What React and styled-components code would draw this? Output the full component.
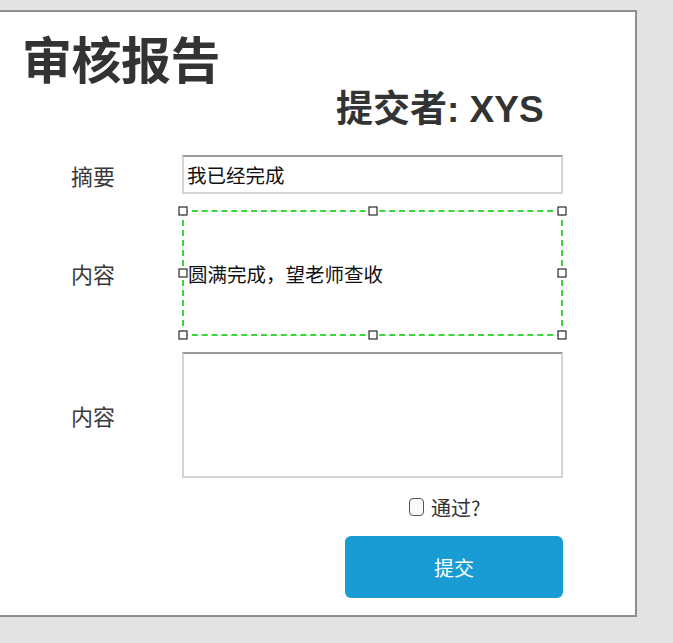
import React from "react";
import styled, { createGlobalStyle } from "styled-components";

const Global = createGlobalStyle`
  html, body { margin: 0; padding: 0; background: #e3e3e3; }
  body { font-family: "Noto Sans CJK SC", "Liberation Sans", sans-serif; color: #333; }
`;

const Panel = styled.div`
  box-sizing: border-box;
  margin-top: 10px;
  width: 637px;
  height: 607px;
  background: #fff;
  border: 2px solid #8e8e8e;
  border-left: none;
  position: relative;
`;

const Title = styled.h1`
  margin: 0;
  padding: 13px 0 0 22px;
  font-size: 50px;
  line-height: 64px;
  font-weight: 700;
  color: #333;
  letter-spacing: -0.5px;
`;

const Submitter = styled.h2`
  margin: 0;
  padding-left: 336px;
  font-size: 37px;
  line-height: 42px;
  font-weight: 700;
  color: #333;
  font-family: "Liberation Sans", "Noto Sans CJK SC", sans-serif;
`;

const Form = styled.div`
  display: grid;
  grid-template-columns: 182px 381px;
  row-gap: 16px;
  margin-top: 24px;
`;

const Label = styled.div`
  padding-left: 71px;
  font-size: 22px;
  color: #3a3a3a;
  display: flex;
  align-items: center;
`;

const Field = styled.div`
  box-sizing: border-box;
  height: ${(p) => p.$h}px;
  border: 2px solid #d4d4d4;
  border-top-color: #9a9a9a;
  background: #fff;
  display: flex;
  align-items: center;
  padding-left: 3px;
  font-size: 19.5px;
  color: #111;
  position: relative;
`;

const Selected = styled(Field)`
  border: 2px dashed #39d839;
  padding-left: 4px;
`;

const Handle = styled.span`
  box-sizing: border-box;
  position: absolute;
  width: 9px;
  height: 9px;
  background: #fff;
  border: 1px solid #000;
  left: ${(p) => p.$x};
  top: ${(p) => p.$y};
  transform: translate(-50%, -50%);
`;

const CheckRow = styled.label`
  display: flex;
  align-items: center;
  gap: 7px;
  margin: 15px 0 0 409px;
  font-size: 20px;
  color: #333;
  height: 28px;
`;

const Box = styled.span`
  box-sizing: border-box;
  width: 15px;
  height: 18px;
  border: 1px solid #555;
  border-radius: 4px;
  background: #fafafa;
`;

const ButtonRow = styled.div`
  display: flex;
  padding-left: 345px;
  margin-top: 15px;
`;

const Button = styled.button`
  width: 218px;
  height: 62px;
  border: none;
  border-radius: 6px;
  background: #199cd4;
  color: #fff;
  font-size: 20px;
  font-family: inherit;
`;

const handles = [
  ["-1px", "-1px"], ["50%", "-1px"], ["calc(100% + 1px)", "-1px"],
  ["-1px", "50%"], ["calc(100% + 1px)", "50%"],
  ["-1px", "calc(100% + 1px)"], ["50%", "calc(100% + 1px)"], ["calc(100% + 1px)", "calc(100% + 1px)"],
];

export default function App() {
  return (
    <>
      <Global />
      <Panel>
        <Title>审核报告</Title>
        <Submitter>提交者: XYS</Submitter>
        <Form>
          <Label>摘要</Label>
          <Field $h={39}>我已经完成</Field>
          <Label>内容</Label>
          <Selected $h={126}>
            圆满完成，望老师查收
            {handles.map(([x, y], i) => (
              <Handle key={i} $x={x} $y={y} />
            ))}
          </Selected>
          <Label>内容</Label>
          <Field $h={126} />
        </Form>
        <CheckRow>
          <Box />
          通过?
        </CheckRow>
        <ButtonRow>
          <Button>提交</Button>
        </ButtonRow>
      </Panel>
    </>
  );
}
